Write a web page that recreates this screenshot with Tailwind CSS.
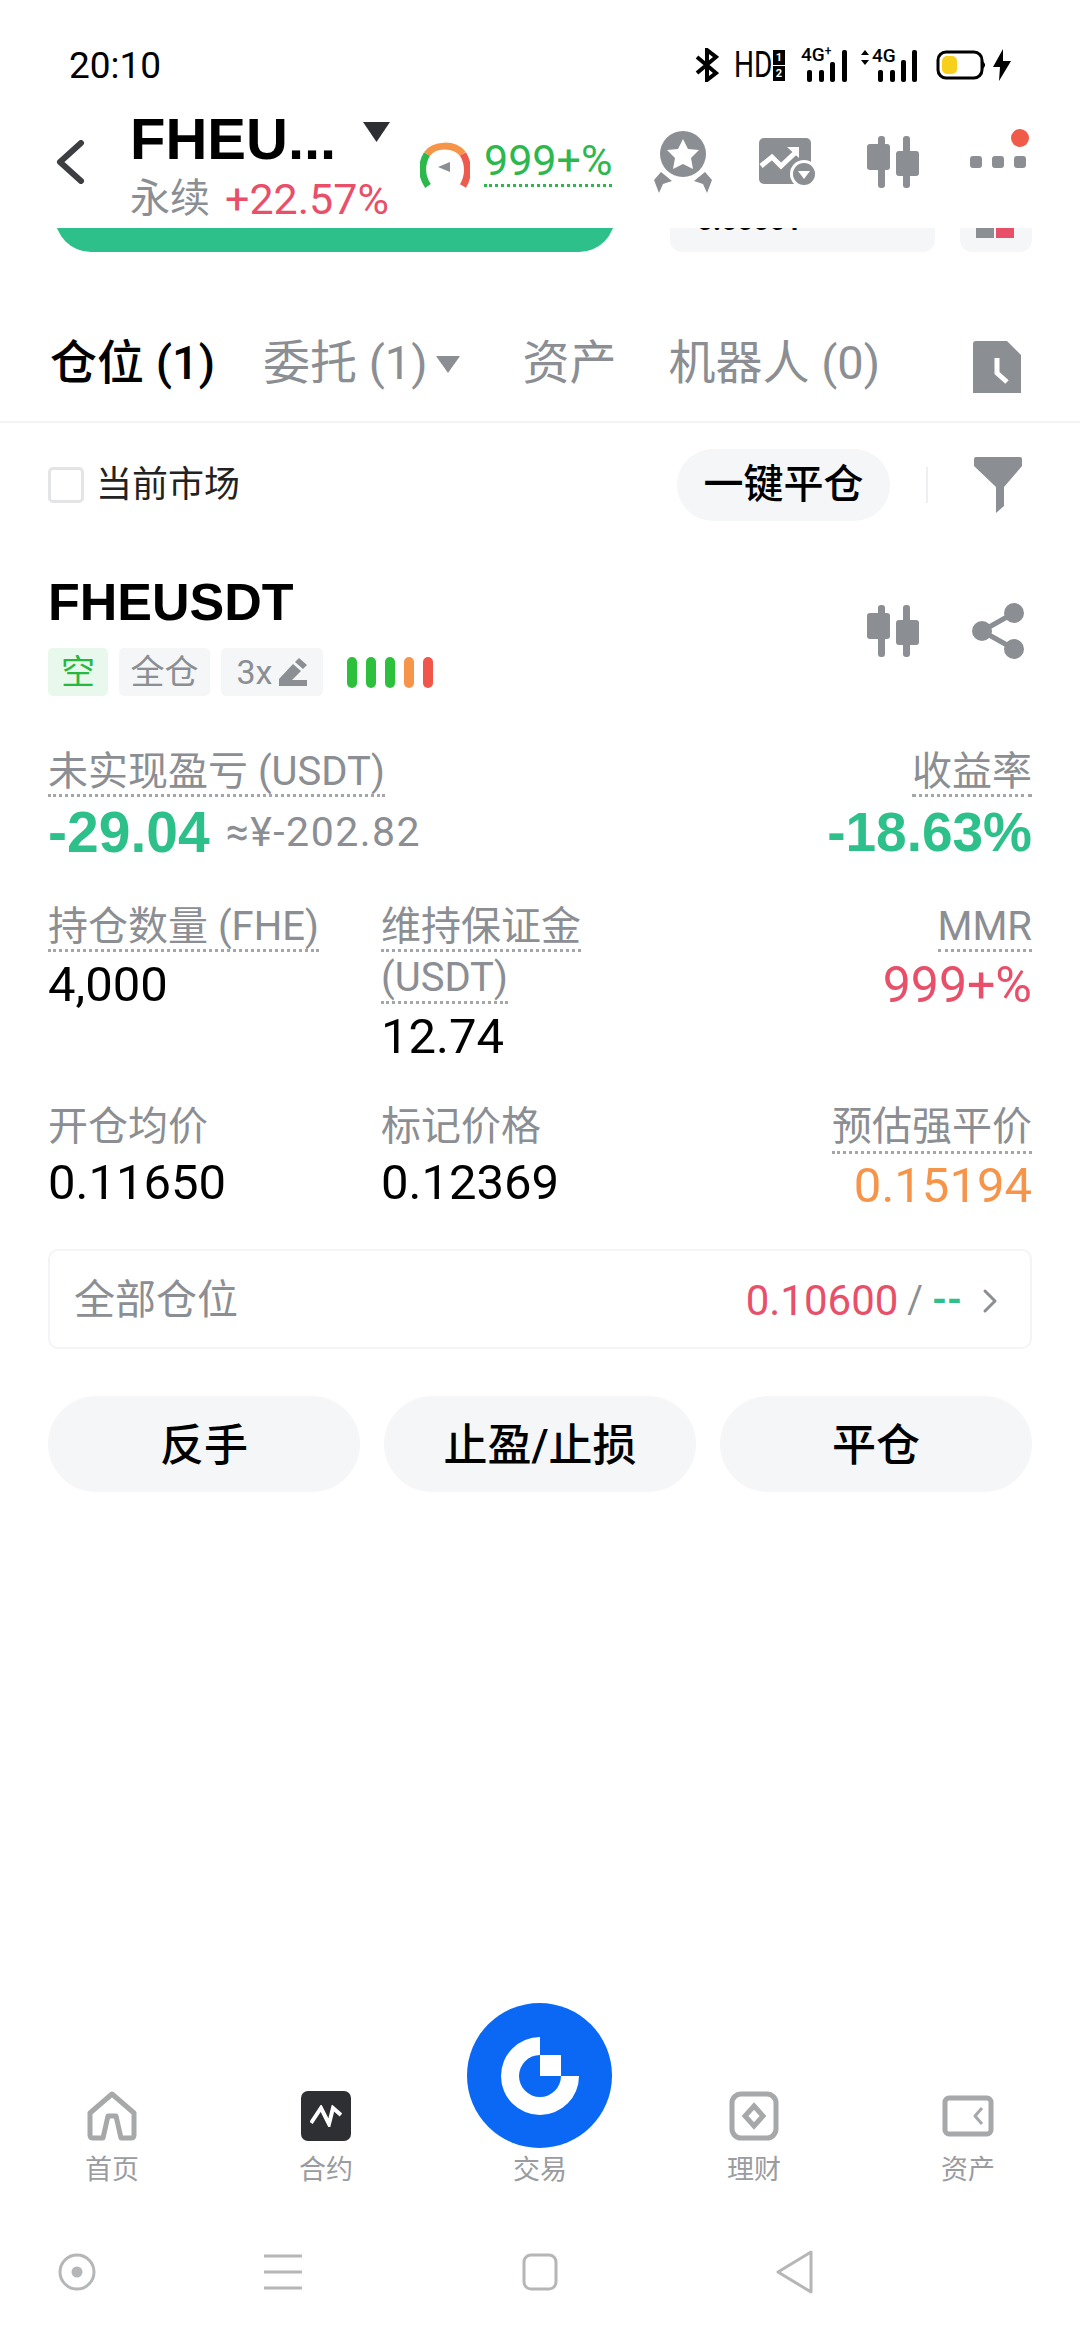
<!DOCTYPE html>
<html lang="zh-CN">
<head>
  <meta charset="UTF-8">
  <meta name="viewport" content="width=device-width, initial-scale=1.0">
  <title>FHEUSDT 仓位</title>
  <script src="https://cdn.jsdelivr.net/npm/@tailwindcss/browser@4"></script>
</head>
<body class="bg-white">
<div class="relative w-[1080px] h-[2340px] overflow-hidden bg-white text-black font-['Roboto','Noto_Sans_CJK_SC',sans-serif]">

  <!-- Status bar -->
  <div class="h-[100px] pl-[69px] pr-[68px] pt-[46px] flex justify-between items-start">
    <span class="text-[37px] leading-[40px]">20:10</span>
    <div class="flex items-center h-[36px] mt-[1px]">
      <svg class="w-[24px] h-[34px]" viewBox="0 0 24 34" fill="none" stroke="#000" stroke-width="4"><path d="M2 9l19 16-9 7V2l9 7L2 25"/></svg>
      <span class="ml-[15px] w-[37px] text-[36px] leading-[36px] scale-x-[0.78] origin-left">HD</span>
      <div class="flex flex-col gap-[1px] ml-[2px] w-[12px] text-[11px] leading-[15px] text-white font-bold text-center"><span class="bg-black h-[15px]">1</span><span class="bg-black h-[15px]">2</span></div>
      <div class="relative w-[46px] h-[34px] ml-[16px]">
        <span class="absolute left-0 top-[-4px] text-[19px] font-medium leading-[22px]">4G<sup class="text-[12px]">+</sup></span>
        <svg class="absolute inset-0 w-[46px] h-[34px]" viewBox="0 0 46 34" fill="#000"><rect x="6" y="22" width="5" height="12" rx="2"/><rect x="18" y="22" width="5" height="12" rx="2"/><rect x="29" y="14" width="5" height="20" rx="2"/><rect x="41" y="2" width="5" height="32" rx="2"/></svg>
      </div>
      <div class="relative w-[57px] h-[34px] ml-[13px]">
        <span class="absolute left-[12px] top-[-3px] text-[19px] font-medium leading-[22px]">4G</span>
        <svg class="absolute inset-0 w-[57px] h-[34px]" viewBox="0 0 57 34" fill="#000"><path d="M1 7l4-5 4 5zM1 12l4 5 4-5z"/><rect x="18" y="22" width="5" height="12" rx="2"/><rect x="30" y="22" width="5" height="12" rx="2"/><rect x="41" y="12" width="5" height="22" rx="2"/><rect x="52" y="2" width="5" height="32" rx="2"/></svg>
      </div>
      <svg class="w-[50px] h-[30px] ml-[19px]" viewBox="0 0 50 30"><rect x="2" y="2" width="44" height="26" rx="8" fill="none" stroke="#000" stroke-width="3"/><path d="M47 11l2 3v2l-2 3z" fill="#000"/><rect x="6" y="6" width="15" height="18" rx="5" fill="#f7cf1d"/></svg>
      <svg class="w-[20px] h-[32px] ml-[6px]" viewBox="0 0 20 32" fill="#000"><path d="M11 0L1 18h7l-1 14 12-20h-8z"/></svg>
    </div>
  </div>

  <!-- Header -->
  <div class="h-[128px] flex items-start pl-[55px] pr-[48px] relative">
    <svg class="w-[30px] h-[44px] mt-[40px]" viewBox="0 0 30 44" fill="none" stroke="#3c3e42" stroke-width="6" stroke-linecap="round" stroke-linejoin="round"><path d="M26 3L5 22l21 19"/></svg>
    <div class="ml-[45px] w-[290px]">
      <div class="flex items-start h-[62px] mt-[8px]">
        <span class="text-[58px] leading-[62px] font-bold font-['Liberation_Sans']">FHEU...</span>
        <svg class="w-[27px] h-[20px] ml-[27px] mt-[14px]" viewBox="0 0 27 20" fill="#2d2f33"><path d="M0 0h27L13.5 20z"/></svg>
      </div>
      <div class="flex items-center mt-[7px] h-[44px]">
        <span class="text-[40px] text-[#8b8e92] leading-[44px]">永续</span>
        <span class="ml-[15px] text-[43px] text-[#e8506a] leading-[44px] whitespace-nowrap">+22.57%</span>
      </div>
    </div>
    <svg class="w-[50px] h-[50px] mt-[40px]" viewBox="0 0 50 50" fill="none" stroke-width="7">
      <path d="M8 46C1 36 1 24 7 14" stroke="#2db84d"/>
      <path d="M7 14C14 4 34 3 43 14" stroke="#f6944a"/>
      <path d="M43 14C49 24 49 36 43 46" stroke="#ee5a4e"/>
      <path d="M18 27l12-5v10z" fill="#8b8e92"/>
    </svg>
    <div class="ml-[14px] mt-[37px] border-b-[3px] border-dotted border-[#2db84d] h-[50px] text-[43px] leading-[46px] text-[#2db84d]">999+%</div>

    <svg class="absolute left-[653px] top-[30px] w-[60px] h-[64px]" viewBox="0 0 60 64" fill="#8b8e92">
      <circle cx="30" cy="24" r="23"/>
      <path d="M30 9l5 10 11 1-8 8 2 11-10-5-10 5 2-11-8-8 11-1z" fill="#fff"/>
      <path d="M8 42l11 9-9 3-4 9-5-13zM52 42l-11 9 9 3 4 9 5-13z"/>
    </svg>
    <svg class="absolute left-[759px] top-[38px] w-[58px] h-[48px]" viewBox="0 0 58 48" fill="#8b8e92">
      <rect x="0" y="0" width="52" height="46" rx="5"/>
      <path d="M2 28l11-9 9 9 16-15" fill="none" stroke="#fff" stroke-width="5"/>
      <path d="M28 9h12v11z" fill="#fff"/>
      <circle cx="45" cy="36" r="14" fill="#fff"/>
      <circle cx="45" cy="36" r="11"/>
      <path d="M39 33h12l-6 8z" fill="#fff"/>
    </svg>
    <svg class="absolute left-[867px] top-[36px] w-[52px] h-[52px]" viewBox="0 0 52 52" fill="#8b8e92">
      <rect x="11" y="0" width="7" height="52" rx="3"/><rect x="0" y="8" width="23" height="26" rx="3"/>
      <rect x="36" y="0" width="7" height="52" rx="3"/><rect x="29" y="15" width="23" height="25" rx="3"/>
    </svg>
    <div class="absolute left-[970px] top-[56px] flex gap-[10px]">
      <span class="w-[12px] h-[12px] rounded-[3px] bg-[#8b8e92]"></span>
      <span class="w-[12px] h-[12px] rounded-[3px] bg-[#8b8e92]"></span>
      <span class="w-[12px] h-[12px] rounded-[3px] bg-[#8b8e92]"></span>
    </div>
    <span class="absolute left-[1011px] top-[29px] w-[18px] h-[18px] rounded-full bg-[#f05a48]"></span>
  </div>

  <!-- Clipped content scrolled under header -->
  <div class="h-[24px] flex overflow-hidden pl-[55px]">
    <div class="w-[560px] h-[72px] mt-[-48px] bg-[#2dc08a] rounded-[36px] shrink-0"></div>
    <div class="ml-[55px] w-[265px] h-[24px] bg-[#f5f6f7] rounded-b-[12px] overflow-hidden pl-[27px]"><span class="block mt-[-22px] text-[28px] leading-[30px] font-bold">0.00001</span></div>
    <div class="ml-[25px] w-[72px] h-[24px] bg-[#f5f6f7] rounded-b-[12px] flex gap-[2px] pl-[16px]"><span class="w-[18px] h-[10px] bg-[#8b8e92]"></span><span class="w-[18px] h-[10px] bg-[#e8506a]"></span></div>
  </div>

  <!-- Tabs -->
  <div class="h-[171px] pt-[84px] pl-[50px] pr-[48px] border-b-2 border-[#f2f3f4] flex text-[47px] leading-[54px] text-[#8b8e92]">
    <span class="text-black font-medium w-[213px]">仓位 (1)</span>
    <span>委托 (1)</span>
    <svg class="w-[24px] h-[17px] ml-[8px] mt-[20px]" viewBox="0 0 24 17" fill="#8b8e92"><path d="M0 0h24L12 17z"/></svg>
    <span class="ml-[63px]">资产</span>
    <span class="ml-[52px]">机器人 (0)</span>
    <svg class="absolute left-[973px] top-[341px] w-[48px] h-[52px]" viewBox="0 0 48 52" fill="#8b8e92"><path d="M0 3a3 3 0 013-3h31l14 14v38H0z"/><path d="M24 17v15l10 9" fill="none" stroke="#fff" stroke-width="5"/></svg>
  </div>

  <!-- Filter row -->
  <div class="h-[124px] pl-[48px] pr-[58px] flex items-center">
    <span class="w-[36px] h-[36px] rounded-[5px] border-[3px] border-[#e2e4e6] bg-white"></span>
    <span class="ml-[12px] text-[36px] text-[#222]">当前市场</span>
    <span class="ml-auto w-[213px] h-[72px] rounded-full bg-[#f5f6f7] flex items-center justify-center text-[40px] font-medium">一键平仓</span>
    <span class="ml-[36px] w-[2px] h-[36px] bg-[#eeeff0]"></span>
    <svg class="ml-[46px] w-[48px] h-[56px]" viewBox="0 0 48 56" fill="#8b8e92"><path d="M2 0h44a2 2 0 012 2v7L30 30v19l-8 7V30L0 9V2a2 2 0 012-2z"/></svg>
  </div>

  <!-- Position card -->
  <div class="px-[48px] pt-[25px]">
    <div class="flex justify-between items-start h-[98px]">
      <div>
        <div class="text-[52px] leading-[60px] font-bold font-['Liberation_Sans']">FHEUSDT</div>
        <div class="flex items-center gap-[11px] mt-[16px] h-[48px] text-[34px] text-[#8b8e92]">
          <span class="w-[60px] h-[48px] rounded-[5px] bg-[#e9f8ec] text-[#27b93f] flex items-center justify-center">空</span>
          <span class="w-[91px] h-[48px] rounded-[5px] bg-[#f5f6f7] flex items-center justify-center">全仓</span>
          <span class="w-[102px] h-[48px] rounded-[5px] bg-[#f5f6f7] flex items-center justify-center gap-[7px]">3x
            <svg class="w-[28px] h-[28px]" viewBox="0 0 28 28" fill="#8b8e92"><path d="M0 28v-7L14 6l8 7-9 9h15v6zM16 4l4-4 8 7-4 4z"/></svg>
          </span>
          <span class="flex gap-[9px] ml-[13px]">
            <i class="w-[10px] h-[31px] rounded-full bg-[#2cc03c]"></i>
            <i class="w-[10px] h-[31px] rounded-full bg-[#2cc03c]"></i>
            <i class="w-[10px] h-[31px] rounded-full bg-[#2cc03c]"></i>
            <i class="w-[10px] h-[31px] rounded-full bg-[#f6944a]"></i>
            <i class="w-[10px] h-[31px] rounded-full bg-[#f0564a]"></i>
          </span>
        </div>
      </div>
      <div class="flex items-center gap-[53px] mt-[31px] mr-[8px]">
        <svg class="w-[52px] h-[52px]" viewBox="0 0 52 52" fill="#8b8e92">
          <rect x="11" y="0" width="7" height="52" rx="3"/><rect x="0" y="8" width="23" height="26" rx="3"/>
          <rect x="36" y="0" width="7" height="52" rx="3"/><rect x="29" y="15" width="23" height="25" rx="3"/>
        </svg>
        <svg class="w-[52px] h-[56px]" viewBox="0 0 52 56" fill="#8b8e92">
          <circle cx="42" cy="10" r="10"/><circle cx="10" cy="28" r="10"/><circle cx="42" cy="46" r="10"/>
          <path d="M42 10L10 28l32 18" fill="none" stroke="#8b8e92" stroke-width="5"/>
        </svg>
      </div>
    </div>

    <!-- Metrics -->
    <div class="grid grid-cols-[333px_1fr_auto] mt-[79px] text-[40px] leading-[46px]">
      <div class="col-span-2">
        <span class="inline-block text-[#8b8e92] border-b-[3px] border-dotted border-[#a4a7aa] h-[48px]">未实现盈亏 (USDT)</span>
        <div class="flex items-center h-[58px] mt-[6px]">
          <span class="text-[57px] leading-[58px] font-bold font-['Liberation_Sans'] text-[#2dc08a]">-29.04</span>
          <span class="ml-[16px] text-[41px] tracking-[1.5px] text-[#8b8e92]">≈¥-202.82</span>
        </div>
      </div>
      <div class="text-right">
        <span class="inline-block text-[#8b8e92] border-b-[3px] border-dotted border-[#a4a7aa] h-[48px]">收益率</span>
        <div class="h-[58px] mt-[6px] text-[55px] leading-[58px] font-bold font-['Liberation_Sans'] text-[#2dc08a]">-18.63%</div>
      </div>

      <div class="mt-[43px]">
        <span class="inline-block text-[#8b8e92] border-b-[3px] border-dotted border-[#a4a7aa] h-[48px]">持仓数量 (FHE)</span>
        <div class="text-[49px] leading-[50px] mt-[8px]">4,000</div>
      </div>
      <div class="mt-[43px]">
        <span class="block w-fit text-[#8b8e92] border-b-[3px] border-dotted border-[#a4a7aa] h-[48px]">维持保证金</span>
        <span class="block w-fit text-[#8b8e92] border-b-[3px] border-dotted border-[#a4a7aa] h-[52px] pt-[3px]">(USDT)</span>
        <div class="text-[49px] leading-[50px] mt-[8px]">12.74</div>
      </div>
      <div class="mt-[43px] text-right">
        <span class="inline-block text-[#8b8e92] border-b-[3px] border-dotted border-[#a4a7aa] h-[48px]">MMR</span>
        <div class="text-[50px] leading-[50px] mt-[8px] text-[#e8506a]">999+%</div>
      </div>

      <div class="mt-[42px] text-[#8b8e92] h-[46px]">开仓均价</div>
      <div class="mt-[42px] text-[#8b8e92] h-[46px]">标记价格</div>
      <div class="mt-[42px] text-right row-span-2">
        <span class="inline-block text-[#8b8e92] border-b-[3px] border-dotted border-[#a4a7aa] h-[50px]">预估强平价</span>
        <div class="text-[49px] leading-[50px] mt-[7px] text-[#f6944a]">0.15194</div>
      </div>
      <div class="text-[49px] leading-[50px] mt-[5px]">0.11650</div>
      <div class="text-[49px] leading-[50px] mt-[5px]">0.12369</div>
    </div>

    <!-- All positions -->
    <div class="mt-[38px] h-[100px] rounded-[10px] border-2 border-[#f3f4f5] flex items-center pl-[24px] pr-[32px] pt-[3px] text-[41px]">
      <span class="text-[#8b8e92]">全部仓位</span>
      <span class="ml-auto text-[42px] text-[#e8506a]">0.10600</span>
      <span class="ml-[9px] text-[38px] text-[#8b8e92]">/</span>
      <span class="ml-[9px] text-[38px] font-bold text-[#2dc08a]">--</span>
      <svg class="ml-[20px] w-[16px] h-[26px]" viewBox="0 0 16 26" fill="none" stroke="#8b8e92" stroke-width="3" stroke-linecap="round" stroke-linejoin="round"><path d="M3 3l10 10L3 23"/></svg>
    </div>

    <!-- Actions -->
    <div class="grid grid-cols-3 gap-[24px] mt-[47px] text-[44px] font-medium">
      <button class="h-[96px] rounded-full bg-[#f5f6f7] pt-[3px]">反手</button>
      <button class="h-[96px] rounded-full bg-[#f5f6f7] pt-[3px]">止盈/止损</button>
      <button class="h-[96px] rounded-full bg-[#f5f6f7] pt-[3px]">平仓</button>
    </div>
  </div>

  <!-- Bottom nav -->
  <div class="absolute left-0 right-0 top-[2091px] grid grid-cols-5 px-[5px] text-[27px] leading-[32px] text-[#9a9c9f] text-center">
    <div class="flex flex-col items-center">
      <svg class="w-[50px] h-[50px]" viewBox="0 0 50 50" fill="none" stroke="#a6a8aa" stroke-width="5" stroke-linejoin="round"><path d="M25 3L3 22v22q0 3 3 3h10l5-22h8l5 22h10q3 0 3-3V22z"/></svg>
      <span class="mt-[13px]">首页</span>
    </div>
    <div class="flex flex-col items-center">
      <div class="w-[50px] h-[50px] rounded-[7px] bg-[#2d2f33] flex items-center justify-center">
        <svg class="w-[32px] h-[22px]" viewBox="0 0 32 22" fill="none" stroke="#fff" stroke-width="4"><path d="M1 18L11 3l8 16L23 3l8 7"/></svg>
      </div>
      <span class="mt-[13px]">合约</span>
    </div>
    <div class="flex flex-col items-center">
      <div class="h-[50px]"></div>
      <span class="mt-[13px]">交易</span>
    </div>
    <div class="flex flex-col items-center">
      <svg class="w-[50px] h-[50px]" viewBox="0 0 50 50" fill="none" stroke="#a6a8aa" stroke-width="5"><rect x="3" y="3" width="44" height="44" rx="9"/><path d="M25 15l9 10-9 10-9-10z"/></svg>
      <span class="mt-[13px]">理财</span>
    </div>
    <div class="flex flex-col items-center">
      <svg class="w-[52px] h-[42px] mt-[4px] mb-[4px]" viewBox="0 0 52 42" fill="none" stroke="#a6a8aa" stroke-width="5" stroke-linejoin="round"><rect x="3" y="3" width="46" height="36" rx="4"/><path d="M40 13l-7 8 7 8" stroke-width="3"/></svg>
      <span class="mt-[13px]">资产</span>
    </div>
  </div>

  <!-- Center trade button -->
  <div class="absolute left-[467px] top-[2003px] w-[145px] h-[145px] rounded-full bg-[#0a68f5] flex items-center justify-center">
    <svg class="w-[78px] h-[78px]" viewBox="0 0 78 78">
      <path d="M39 0A39 39 0 1078 39H39z" fill="#fff"/>
      <circle cx="39" cy="39" r="21" fill="#0a68f5"/>
      <rect x="39" y="18" width="21" height="21" fill="#fff"/>
    </svg>
  </div>

  <!-- System nav -->
  <div class="absolute left-0 right-0 top-[2252px] h-[40px]">
    <svg class="absolute left-[58px] top-[1px] w-[38px] h-[38px]" viewBox="0 0 38 38" fill="none" stroke="#b5b6b8" stroke-width="3"><circle cx="19" cy="19" r="17"/><circle cx="19" cy="19" r="4" fill="#b5b6b8"/></svg>
    <svg class="absolute left-[264px] top-[2px] w-[38px] h-[36px]" viewBox="0 0 38 36" stroke="#b5b6b8" stroke-width="3"><path d="M0 2h38M0 18h38M0 34h38"/></svg>
    <svg class="absolute left-[522px] top-[1px] w-[36px] h-[38px]" viewBox="0 0 36 38" fill="none" stroke="#b5b6b8" stroke-width="3"><rect x="2" y="2" width="32" height="34" rx="7"/></svg>
    <svg class="absolute left-[776px] top-[-2px] w-[38px] h-[44px]" viewBox="0 0 38 44" fill="none" stroke="#b5b6b8" stroke-width="3" stroke-linejoin="round"><path d="M35 2L2 22l33 20z"/></svg>
  </div>
</div>
</body>
</html>
